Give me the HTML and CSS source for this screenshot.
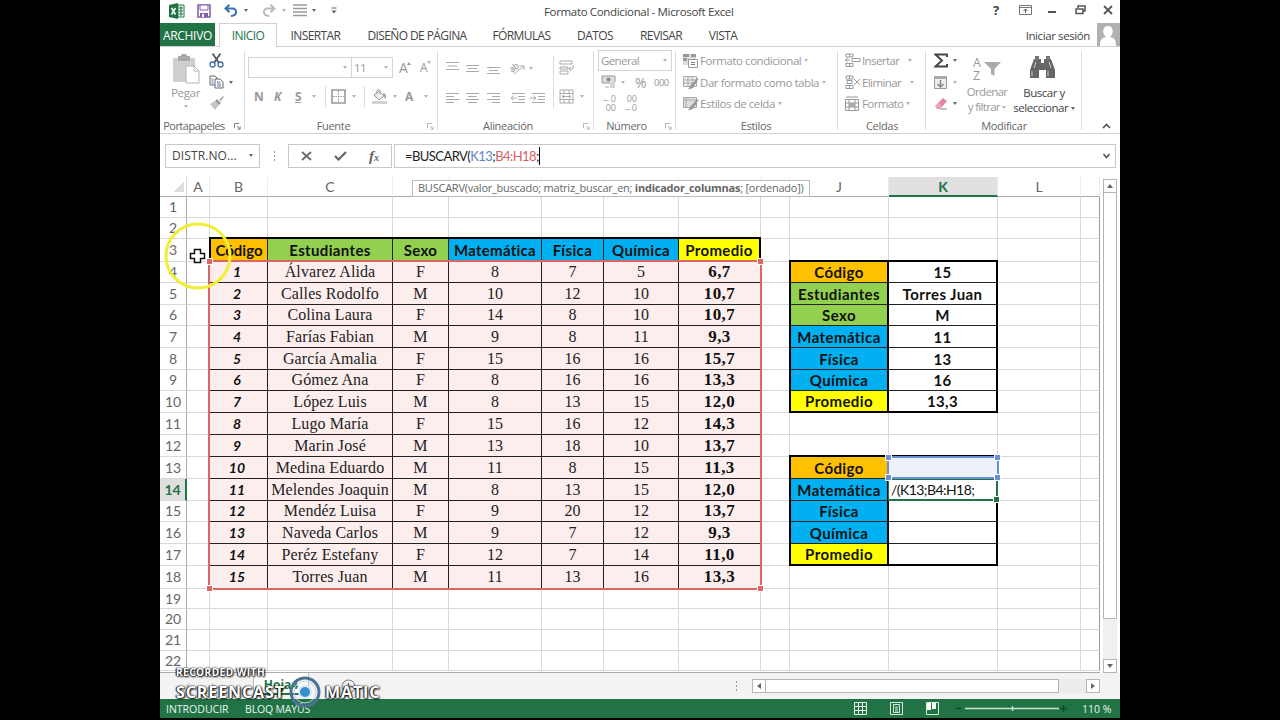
FILE: index.html
```html
<!DOCTYPE html>
<html lang="es">
<head>
    <meta charset="UTF-8">
    <meta name="viewport" content="width=device-width, initial-scale=1.0">
    <title>Formato Condicional - Microsoft Excel</title>
    <link rel="stylesheet" href="styles.css">
</head>
<body>

<div class="window">

    <!-- Title bar -->
    <header class="titlebar">
        <div class="quick">
            <svg width="16" height="16" viewBox="0 0 16 16"><path d="M9 2h6v12H9z" fill="#fff" stroke="#217346"/><path d="M10 5h4M10 8h4M10 11h4M12 3v10" stroke="#217346"/><path d="M0 2l9-2v16l-9-2z" fill="#217346"/><path d="M2.500 5l4 6.500M6.500 5l-4 6.500" stroke="#fff" stroke-width="1.500"/></svg>
            <svg width="14" height="14" viewBox="0 0 14 14"><path d="M1 1h12v12H1z" fill="#fff" stroke="#8560a8" stroke-width="1.600"/><path d="M3 1h8v5H3z" fill="#fff" stroke="#8560a8"/><path d="M3 9h8v4H3z" fill="#8560a8"/><path d="M5 10h2v3H5z" fill="#fff"/></svg>
            <svg width="14" height="13" viewBox="0 0 14 13"><path d="M1.500 4.500h7c5 0 5 7-1.500 7.500M5.500.800L1.500 4.500l4 3.700" fill="none" stroke="#3673b5" stroke-width="2"/></svg>
            <i class="caret dark"></i>
            <svg width="14" height="13" viewBox="0 0 14 13"><path d="M12.500 4.500h-7c-5 0-5 7 1.500 7.500M8.500.800l4 3.700-4 3.700" fill="none" stroke="#bbb" stroke-width="2"/></svg>
            <i class="caret"></i>
            <svg width="14" height="13" viewBox="0 0 14 13"><path d="M0 1h14M0 4.500h14M0 8h14M0 11.500h14" stroke="#999" stroke-width="1.600"/></svg>
            <i class="caret dark"></i>
            <svg width="6" height="8" viewBox="0 0 6 8"><path d="M.5 1h5" stroke="#666"/><path d="M.5 3.500h5L3 6.500z" fill="#666"/></svg>
        </div>
        <div class="title">Formato Condicional - Microsoft Excel</div>
        <div class="controls">
            <b>?</b>
            <svg width="13" height="11" viewBox="0 0 13 11"><path d="M.5.500h12v9H.5zM.5 2.500h12" fill="none" stroke="#777"/><path d="M6.500 8V4M4.500 6l2-2 2 2" fill="none" stroke="#555"/></svg>
            <svg width="10" height="11" viewBox="0 0 10 11"><path d="M1 7h8" stroke="#555" stroke-width="2"/></svg>
            <svg width="11" height="10" viewBox="0 0 11 10"><path d="M3 3V1h7v5H8" fill="none" stroke="#555" stroke-width="1.500"/><path d="M1 4h7v4.500H1z" fill="#fff" stroke="#555" stroke-width="1.500"/></svg>
            <svg width="10" height="10" viewBox="0 0 10 10"><path d="M1 1l8 8M9 1L1 9" stroke="#555" stroke-width="1.800"/></svg>
        </div>
    </header>

    <!-- Ribbon tabs -->
    <nav class="tabs">
        <span class="tab file">ARCHIVO</span>
        <span class="tab active">INICIO</span>
        <span class="tab insertar">INSERTAR</span>
        <span class="tab diseno">DISEÑO DE PÁGINA</span>
        <span class="tab formulas">FÓRMULAS</span>
        <span class="tab datos">DATOS</span>
        <span class="tab revisar">REVISAR</span>
        <span class="tab vista">VISTA</span>
        <span class="login">Iniciar sesión</span>
        <svg class="avatar" width="23" height="23" viewBox="0 0 23 23"><path d="M0 0h23v23H0z" fill="#b0b0b0"/><path d="M3 23c0-7 2-8 6-9-4-3-4-11 2-11s6 8 2 11c4 1 6 2 6 9z" fill="#fff"/></svg>
    </nav>

    <!-- Ribbon -->
    <section class="ribbon">
        <div class="group g-clip">
            <div class="body">
                <div class="big paste">
                    <svg width="28" height="30" viewBox="0 0 28 30"><path d="M1 4h22v24H1z" fill="#cfcfcf"/><path d="M6 2h3c0-3 6-3 6 0h3v5H6z" fill="#a8a8a8"/><path d="M14 12h8l5 5v12H14z" fill="#fff" stroke="#b5b5b5"/><path d="M22 12v5h5" fill="none" stroke="#b5b5b5"/></svg>
                    <span>Pegar</span>
                    <i class="caret"></i>
                </div>
                <div class="stack">
                    <svg width="15" height="15" viewBox="0 0 15 15"><path d="M3.500.500L10 10M11.500.500L5 10" stroke="#555" stroke-width="1.700"/><circle cx="3.500" cy="11.500" r="2.500" fill="none" stroke="#3c6aa0" stroke-width="1.300"/><circle cx="11.500" cy="11.500" r="2.500" fill="none" stroke="#3c6aa0" stroke-width="1.300"/></svg>
                    <div class="row"><svg width="15" height="14" viewBox="0 0 15 14"><path d="M1 1h5l2 2v7H1z" fill="#fff" stroke="#666"/><path d="M6 4h5l3 3v6H6z" fill="#fff" stroke="#666"/><path d="M8 7h3M8 9h4M8 11h4M2.500 4h2M2.500 6h2M2.500 8h2" stroke="#4a76ad"/></svg><i class="caret dark"></i></div>
                    <svg width="15" height="14" viewBox="0 0 15 14"><path d="M1 8l5-3 4 4-4 5z" fill="#c4c4c4"/><path d="M6 5l2-2 4 4-2 2z" fill="#999"/><path d="M10 4l4-4 1 1-3 4z" fill="#aaa"/></svg>
                </div>
            </div>
            <footer>Portapapeles<svg class="launch dark" viewBox="0 0 8 8"><path d="M.5 6V.500H6M3.500 3.500l3 3M7 4v3H4" /></svg></footer>
        </div>

        <div class="group g-font">
            <div class="body">
                <div class="row font-row">
                    <div class="combo name"><i class="caret"></i></div>
                    <div class="combo size"><span>11</span><i class="caret"></i></div>
                    <span class="grow">A<i class="caret flip"></i></span>
                    <span class="shrink">A<i class="caret"></i></span>
                </div>
                <div class="row style-row">
                    <b>N</b><b><i>K</i></b><b><u>S</u></b><i class="caret"></i>
                    <hr>
                    <svg width="15" height="15" viewBox="0 0 15 15"><path d="M1 1h13v13H1z" fill="none" stroke="#999" stroke-width="1.600"/><path d="M7.500 2v11M2 7.500h11" stroke="#999" stroke-dasharray="1.500 1"/></svg><i class="caret"></i>
                    <hr>
                    <svg width="16" height="15" viewBox="0 0 16 15"><path d="M2 6l5-4 5 5-5 4z" fill="#eee" stroke="#999"/><path d="M5 5V2c0-2 3-2 3 0v3" fill="none" stroke="#999"/><path d="M11 4c4 0 3 4 3 6-2 0-2-3-3-5z" fill="#aaa"/><path d="M0 12h15v3H0z" fill="#d2d2d2"/></svg><i class="caret"></i>
                    <b>A</b><i class="caret"></i>
                </div>
            </div>
            <footer>Fuente<svg class="launch" viewBox="0 0 8 8"><path d="M.5 6V.500H6M3.500 3.500l3 3M7 4v3H4" /></svg></footer>
        </div>

        <div class="group g-align">
            <div class="body">
                <div class="align-grid">
                    <svg width="14" height="14" viewBox="0 0 14 14"><path d="M0 1.500h13M2 5h9M0 8.500h13"/></svg>
                    <svg width="14" height="14" viewBox="0 0 14 14"><path d="M0 4.500h13M2 7.500h9M0 10.500h13"/></svg>
                    <svg width="14" height="14" viewBox="0 0 14 14"><path d="M0 6.500h13M2 9.500h9M0 12.500h13"/></svg>
                    <div class="row"><svg width="16" height="14" viewBox="0 0 16 14"><text x="0" y="10" transform="rotate(-38 4 8)">ab</text><path d="M4 13L14 5M14 9V5h-4"/></svg><i class="caret"></i></div>
                    <span></span>
                    <svg width="14" height="14" viewBox="0 0 14 14"><path d="M0 2.500h13M0 5.500h8M0 8.500h13M0 11.500h8"/></svg>
                    <svg width="14" height="14" viewBox="0 0 14 14"><path d="M0 2.500h13M2 5.500h9M0 8.500h13M2 11.500h9"/></svg>
                    <svg width="14" height="14" viewBox="0 0 14 14"><path d="M0 2.500h13M5 5.500h8M0 8.500h13M5 11.500h8"/></svg>
                    <svg width="15" height="14" viewBox="0 0 15 14"><path d="M2 2.500h13M8 5.500h7M8 8.500h7M2 11.500h13M7 7H1M3.500 4.500L1 7l2.500 2.500"/></svg>
                    <svg width="15" height="14" viewBox="0 0 15 14"><path d="M2 2.500h13M8 5.500h7M8 8.500h7M2 11.500h13M0 7h6M3.500 4.500L6 7 3.500 9.500"/></svg>
                </div>
                <div class="wrap-col">
                    <svg width="16" height="15" viewBox="0 0 16 15"><path d="M1 1h12v3H1zM1 7h8v2H1zM1 11h8v3H1zM10 9h4V5M12 7l-2 2 2 2"/></svg>
                    <div class="row"><svg width="16" height="15" viewBox="0 0 16 15"><path d="M1 1h13v13H1zM1 4.500h13M1 10.500h13M5 1v3M10 1v3M5 11v3M10 11v3M3 7.500h9M5 6L3 7.500 5 9M10 6l2 1.500L10 9"/></svg><i class="caret"></i></div>
                </div>
            </div>
            <footer>Alineación<svg class="launch" viewBox="0 0 8 8"><path d="M.5 6V.500H6M3.500 3.500l3 3M7 4v3H4" /></svg></footer>
        </div>

        <div class="group g-num">
            <div class="body">
                <div class="combo"><span>General</span><i class="caret"></i></div>
                <div class="row num-row">
                    <svg width="16" height="14" viewBox="0 0 16 14"><path d="M1 1h13v7H1z" fill="#ddd" stroke="#999"/><circle cx="7.500" cy="4.500" r="2" fill="#888"/><path d="M9 7h6v6H9z" fill="#fff"/><path d="M9 8h5M9 10h5M9 12h5M4 12h4" stroke="#aaa"/></svg><i class="caret"></i>
                    <span class="pct">%</span><span class="zeros">000</span>
                </div>
                <div class="row dec-row">
                    <div class="dec"><span>←0</span><span>00</span></div>
                    <div class="dec"><span>00</span><span>→0</span></div>
                </div>
            </div>
            <footer>Número<svg class="launch" viewBox="0 0 8 8"><path d="M.5 6V.500H6M3.500 3.500l3 3M7 4v3H4" /></svg></footer>
        </div>

        <div class="group g-styles">
            <div class="body list">
                <div class="row"><svg width="16" height="15" viewBox="0 0 16 15"><path d="M0 1h13v11H0z" fill="#ddd"/><path d="M0 1h6v3H0zM8 1h5v3H8zM0 5h4v3H0z" fill="#999"/><path d="M5.500 6.500h9v8h-9z" fill="#fff" stroke="#999"/><path d="M8 9.500h4M8 11.500h4" stroke="#777"/></svg><span>Formato condicional</span><i class="caret"></i></div>
                <div class="row"><svg width="16" height="15" viewBox="0 0 16 15"><path d="M.5 1.500h13v10H.5zM.5 5h13M.5 8h13M5 1v11M9 1v11" fill="#eee" stroke="#aaa"/><path d="M14 3l1.500 1L10 13l-5 1.500L7 11z" fill="#999"/></svg><span>Dar formato como tabla</span><i class="caret"></i></div>
                <div class="row"><svg width="16" height="15" viewBox="0 0 16 15"><path d="M.5 1.500h13v10H.5zM.5 4h13M3 1v11" fill="#ddd" stroke="#aaa"/><path d="M14 3l1.500 1L10 13l-5 1.500L7 11z" fill="#999"/></svg><span>Estilos de celda</span><i class="caret"></i></div>
            </div>
            <footer>Estilos</footer>
        </div>

        <div class="group g-cells">
            <div class="body list">
                <div class="row"><svg width="16" height="15" viewBox="0 0 16 15"><path d="M1 1h7v3H1zM4.500 1v3M1 10.500h7v3H1zM4.500 10v4M7 5.500h8v3H7zM5 7H0M2.500 5L.5 7l2 2" fill="none" stroke="#999"/></svg><span>Insertar</span><i class="caret far"></i></div>
                <div class="row"><svg width="16" height="15" viewBox="0 0 16 15"><path d="M1 1h7v3H1zM4.500 1v3M1 10.500h7v3H1zM4.500 10v4M2 5.500h5v3H2zM9 4l6 6M15 4l-6 6" fill="none" stroke="#999"/></svg><span>Eliminar</span><i class="caret far"></i></div>
                <div class="row"><svg width="16" height="15" viewBox="0 0 16 15"><path d="M.5 3.500h13v11H.5zM.5 7h13M.5 11h13M4 4v10M10 4v10M1 1h12" fill="none" stroke="#999"/><path d="M4 7h6v4H4z" fill="#aaa"/></svg><span>Formato</span><i class="caret"></i></div>
            </div>
            <footer>Celdas</footer>
        </div>

        <div class="group g-edit">
            <div class="body">
                <div class="stack">
                    <div class="row"><svg width="14" height="15" viewBox="0 0 14 15"><path d="M13 4V1.500H1.500L8 7.500l-6.500 6H13V11" fill="none" stroke="#444" stroke-width="1.900"/></svg><i class="caret dark"></i></div>
                    <div class="row"><svg width="14" height="15" viewBox="0 0 14 15"><path d="M.5 1.500h12v12H.5z" fill="#eee" stroke="#999"/><path d="M.5 1h12v3H.5z" fill="#aaa"/><path d="M6.500 5v7M3.500 9l3 3 3-3" fill="none" stroke="#888" stroke-width="1.500"/></svg><i class="caret"></i></div>
                    <div class="row"><svg width="14" height="13" viewBox="0 0 14 13"><path d="M4 6l5-5 4 3-5 6z" fill="#e486a2"/><path d="M4 6l4 4-2 2H3L1 9z" fill="#ec9fb5"/><path d="M6 12h7" stroke="#888"/></svg><i class="caret dark"></i></div>
                </div>
                <div class="big sort">
                    <div class="sort-icon"><div><b>A</b><b>Z</b></div><svg width="17" height="16" viewBox="0 0 17 16"><path d="M0 1h17l-6.500 7v7L7 13V8z" fill="#aaa"/></svg></div>
                    <span>Ordenar</span>
                    <span>y filtrar <i class="caret"></i></span>
                </div>
                <div class="big find">
                    <svg width="25" height="23" viewBox="0 0 25 23"><path d="M4 3h7v4h3V3h7l4 11v8h-9v-8h-7v8H0v-8z" fill="#666"/><path d="M5 0h4v4H5zM16 0h4v4h-4z" fill="#777"/><path d="M2 15v5M18 15v5M6 6l-2 6M19 6l2 6" stroke="#ccc"/></svg>
                    <span>Buscar y</span>
                    <span>seleccionar <i class="caret dark"></i></span>
                </div>
            </div>
            <footer>Modificar</footer>
        </div>
        <svg class="collapse" width="9" height="6" viewBox="0 0 9 6"><path d="M1 5l3.500-3.500L8 5" fill="none" stroke="#555" stroke-width="1.700"/></svg>
    </section>

    <!-- Formula bar -->
    <section class="formula">
        <div class="box namebox"><span>DISTR.NO...</span><i class="caret dark"></i></div>
        <svg class="dots" width="3" height="11" viewBox="0 0 3 11"><path d="M1 1h1M1 5h1M1 9h1" stroke="#999" stroke-width="2"/></svg>
        <div class="box buttons">
            <svg width="11" height="10" viewBox="0 0 11 10"><path d="M1 1l9 8M10 1L1 9" stroke="#666" stroke-width="1.700"/></svg>
            <svg width="13" height="10" viewBox="0 0 13 10"><path d="M1 5l3.500 3.500L12 1" fill="none" stroke="#666" stroke-width="2.200"/></svg>
            <em>f<small>x</small></em>
        </div>
        <div class="box input"><span class="text">=BUSCARV(<span class="blue">K13</span>;<span class="red">B4:H18</span>;</span><span class="cursor"></span>
            <svg width="7" height="6" viewBox="0 0 7 6"><path d="M.5 1l3 3.500L6.500 1" fill="none" stroke="#555" stroke-width="1.600"/></svg>
        </div>
    </section>

    <!-- Sheet -->
    <main class="work">
        <div class="sheet" id="sheet"></div>
        <div class="vscroll">
            <div class="btn"><i class="up"></i></div>
            <div class="thumb"></div>
            <div class="track"></div>
            <div class="btn"><i class="down"></i></div>
        </div>
        <div class="hint">BUSCARV(valor_buscado; matriz_buscar_en; <b>indicador_columnas</b>; [ordenado])</div>
        <div class="range red-range"><i></i><i></i><i></i><i></i></div>
        <div class="range edit-range"><i></i></div>
        <div class="range blue-range"><i></i><i></i><i></i><i></i></div>
    </main>

    <!-- Sheet tabs -->
    <section class="sheets">
        <i class="left"></i><i class="right"></i>
        <span class="sheet-tab">Hoja4</span>
        <svg class="plus" width="15" height="15" viewBox="0 0 15 15"><circle cx="7.500" cy="7.500" r="6.500" fill="none" stroke="#777"/><path d="M7.500 4v7M4 7.500h7" stroke="#666" stroke-width="1.500"/></svg>
        <svg class="dots" width="3" height="11" viewBox="0 0 3 11"><path d="M1 1h1M1 5h1M1 9h1" stroke="#999" stroke-width="2"/></svg>
        <div class="hscroll">
            <div class="btn"><i class="left"></i></div>
            <div class="thumb"></div>
            <div class="track"></div>
            <div class="btn"><i class="right"></i></div>
        </div>
    </section>

    <!-- Status bar -->
    <footer class="status">
        <span class="mode">INTRODUCIR</span>
        <span class="caps">BLOQ MAYÚS</span>
        <svg class="views" width="86" height="13" viewBox="0 0 86 13"><path d="M.5.500h12v12H.5zM.5 4.500h12M.5 8.500h12M4.500.500v12M8.500.500v12" fill="none" stroke="#e5f2ea"/><path d="M36.500.500h12v12h-12zM39.500 2.500h6v8h-6zM41 5h3M41 7h3M41 9h3" fill="none" stroke="#d5e9dd"/><path d="M72.500.500h12v12h-12z" fill="none" stroke="#d5e9dd"/><path d="M73 1h4v7h-4zM78 1h4v6h-4z" fill="#fff"/></svg>
        <svg class="zoom" width="114" height="11" viewBox="0 0 114 11"><path d="M1 5.500h5M105 5.500h7M108.500 2v7" stroke="#0e4d2a" stroke-width="1.600"/><path d="M10 5.500h94M57.500 3v5" stroke="#cfe5d8" stroke-width="1.300"/></svg>
        <span class="pctzoom">110 %</span>
    </footer>

    <!-- Recorder mark and mouse pointer -->
    <div class="mark-top">RECORDED WITH</div>
    <div class="mark"><span class="cast">SCREENCAST</span><svg width="34" height="34" viewBox="0 0 34 34"><circle cx="17" cy="17" r="14" fill="none" stroke="#4b7391" stroke-width="3"/><circle cx="17" cy="17" r="11" fill="none" stroke="#b9d4e4"/><circle cx="17" cy="17" r="7" fill="#d8eaf5"/><circle cx="17" cy="17" r="5" fill="#3a8fd0"/></svg><span class="matic">MATIC</span></div>
    <svg class="pointer" width="68" height="68" viewBox="0 0 68 68"><circle cx="34" cy="34" r="32" fill="none" stroke="#f1ee35" stroke-width="3"/><path d="M30.500 27.500h6v4h4v5h-4v4h-6v-4h-4v-5h4z" fill="#fff" stroke="#111" stroke-width="1.500"/></svg>
</div>

<script src="sheet.js"></script>
</body>
</html>
```
FILE: sheet.js
```js
const cols = 'ABCDEFGHIJKLM'.split('');
const heads = ['Código', 'Estudiantes', 'Sexo', 'Matemática', 'Física', 'Química', 'Promedio'];
const colors = ['orange', 'green', 'green', 'sky', 'sky', 'sky', 'yellow'];

const students = [
    ['Álvarez Alida', 'F', 8, 7, 5, '6,7'],
    ['Calles Rodolfo', 'M', 10, 12, 10, '10,7'],
    ['Colina Laura', 'F', 14, 8, 10, '10,7'],
    ['Farías Fabian', 'M', 9, 8, 11, '9,3'],
    ['García Amalia', 'F', 15, 16, 16, '15,7'],
    ['Gómez Ana', 'F', 8, 16, 16, '13,3'],
    ['López Luis', 'M', 8, 13, 15, '12,0'],
    ['Lugo María', 'F', 15, 16, 12, '14,3'],
    ['Marin José', 'M', 13, 18, 10, '13,7'],
    ['Medina Eduardo', 'M', 11, 8, 15, '11,3'],
    ['Melendes Joaquin', 'M', 8, 13, 15, '12,0'],
    ['Mendéz Luisa', 'F', 9, 20, 12, '13,7'],
    ['Naveda Carlos', 'M', 9, 7, 12, '9,3'],
    ['Peréz Estefany', 'F', 12, 7, 14, '11,0'],
    ['Torres Juan', 'M', 11, 13, 16, '13,3']
];

const record = ['15', 'Torres Juan', 'M', '11', '13', '16', '13,3'];
const lookup = [0, 3, 4, 5, 6];

const cells = {};

heads.forEach((h, i) => cells[cols[i + 1] + 3] = [h, 'head ' + colors[i]]);

students.forEach((s, r) => {
    cells['B' + (r + 4)] = [r + 1, 'data code'];
    s.forEach((v, i) => cells[cols[i + 2] + (r + 4)] = [v, i === 5 ? 'data avg' : 'data']);
});

record.forEach((v, i) => {
    const edge = (i === 0 ? ' first' : '') + (i === 6 ? ' last' : '');
    cells['J' + (i + 4)] = [heads[i], 'card key ' + colors[i] + edge];
    cells['K' + (i + 4)] = [v, 'card' + edge];
});

lookup.forEach((n, i) => {
    const edge = (i === 0 ? ' first' : '') + (i === 4 ? ' last' : '');
    cells['J' + (i + 13)] = [heads[n], 'card key ' + colors[n] + edge];
    cells['K' + (i + 13)] = ['', 'card' + edge];
});
cells.K14 = ['/(K13;B4:H18;', 'card editing'];

let html = '<div class="corner"></div>';
cols.forEach(c => html += `<div class="colhead${c === 'K' ? ' on' : ''}">${c === 'M' ? '' : c}</div>`);

for (let r = 1; r <= 22; r++) {
    html += `<div class="rowhead${r === 14 ? ' on' : ''}">${r}</div>`;
    cols.forEach(c => {
        const [text, cls] = cells[c + r] || ['', ''];
        html += `<div class="cell ${cls} c${c}">${text}</div>`;
    });
}

document.getElementById('sheet').innerHTML = html;
```
FILE: styles.css
```css
* {
    box-sizing: border-box;
}

body {
    margin: 0;
    background: #000;
    font-family: 'Open Sans', 'Noto Sans', sans-serif;
    font-size: 11.5px;
    color: #444;
}

.window {
    position: relative;
    width: 960px;
    height: 718px;
    margin: 0 auto;
    background: #fff;
    overflow: hidden;
    white-space: nowrap;
}

svg {
    display: block;
    flex: none;
}

.row {
    display: flex;
    align-items: center;
}

.caret {
    flex: none;
    width: 0;
    height: 0;
    display: inline-block;
    border: 2.5px solid transparent;
    border-top: 3.5px solid #b5b5b5;
    border-bottom: 0;
}

.caret.flip {
    border-top: 0;
    border-bottom: 3.5px solid #999;
}

.caret.dark {
    border-top-color: #666;
}

/* title bar */
.titlebar {
    display: flex;
    align-items: center;
    height: 23px;
    padding-left: 9px;
}

.quick {
    display: grid;
    grid-template-columns: 28px 27px 20px 18px 20px 11px 19px 19px 10px;
    align-items: center;
    width: 374px;
    height: 20px;
    margin-top: -2px;
}

.title {
    width: 450px;
    padding-left: 1px;
    letter-spacing: -0.34px;
}

.controls {
    display: grid;
    grid-template-columns: 26px 28px 28px 28px 12px;
    align-items: center;
    margin-top: -3px;
}

.controls b {
    font-size: 13px;
    line-height: 18px;
}

/* tabs */
.tabs {
    display: flex;
    height: 24px;
    border-bottom: 1px solid #d0d0d0;
    line-height: 25px;
    font-size: 12px;
    letter-spacing: -0.6px;
}

.tab {
    flex: none;
    text-align: center;
}

.tab.file {
    width: 55px;
    background: #217346;
    color: #fff;
    letter-spacing: -0.3px;
}

.tab.active {
    width: 58px;
    height: 24px;
    margin-left: 4px;
    background: #fff;
    border: 1px solid #d0d0d0;
    border-bottom: 0;
    color: #217346;
    line-height: 23px;
}

.insertar { width: 77px; }
.diseno { width: 126px; }
.formulas { width: 83px; }
.datos { width: 64px; }
.revisar { width: 68px; }
.vista { width: 56px; }

.login {
    margin-left: auto;
    margin-right: 7px;
    font-size: 11.5px;
    letter-spacing: -0.4px;
}

/* ribbon */
.ribbon {
    display: flex;
    height: 87px;
    border-bottom: 1px solid #d0d0d0;
    position: relative;
    color: #999;
    letter-spacing: -0.5px;
}

.group {
    position: relative;
    display: flex;
    flex-direction: column;
    flex: none;
}

.group::after {
    content: "";
    position: absolute;
    right: 0;
    top: 4px;
    width: 1px;
    height: 79px;
    background: #ddd;
}

.group .body {
    height: 71px;
}

.group footer {
    height: 15px;
    line-height: 15px;
    text-align: center;
    color: #666;
    position: relative;
    font-size: 11px;
    letter-spacing: -0.3px;
}

.launch {
    position: absolute;
    right: 4px;
    top: 5px;
    width: 7px;
    height: 7px;
    fill: none;
    stroke: #aaa;
}

.launch.dark {
    stroke: #666;
}

.g-clip { width: 85px; }
.g-font { width: 193px; }
.g-align { width: 156px; }
.g-num { width: 82px; }
.g-styles { width: 162px; }
.g-cells { width: 88px; }
.g-edit { width: 156px; }

.g-clip footer { padding-right: 17px; letter-spacing: -0.5px; }
.g-font footer { padding-right: 16px; }
.g-align footer { padding-right: 16px; }
.g-num footer { padding-right: 17px; }
.g-styles footer { padding-right: 2px; }

.big {
    display: flex;
    flex-direction: column;
    align-items: center;
    line-height: 15px;
}

.g-clip .body {
    display: flex;
}

.paste {
    width: 51px;
    padding-top: 7px;
    letter-spacing: -0.3px;
}

.paste span {
    margin: 1px 0 5px;
}

.stack {
    display: flex;
    flex-direction: column;
    justify-content: space-between;
    padding: 6px 0 8px;
    margin-left: -2px;
    width: 30px;
}

.stack .caret {
    margin-left: 5px;
}

.combo {
    display: flex;
    align-items: center;
    justify-content: space-between;
    height: 21px;
    border: 1px solid #d5d5d5;
    padding: 0 4px 0 2px;
}

.font-row {
    margin-top: 10px;
    padding-left: 3px;
}

.combo.name {
    width: 104px;
    justify-content: flex-end;
}

.combo.size {
    width: 41px;
    border-left: 0;
}

.grow,
.shrink {
    font-size: 14px;
    line-height: 20px;
    margin-left: 6px;
    width: 15px;
}

.shrink {
    font-size: 12px;
}

.font-row span .caret {
    vertical-align: 8px;
}

.style-row {
    display: grid;
    grid-template-columns: 20px 21px 17px 13px 6px 21px 12px 8px 21px 12px 19px 8px;
    margin-top: 8px;
    padding-left: 9px;
    height: 21px;
    font-size: 12px;
}

.style-row hr {
    width: 1px;
    height: 21px;
    margin: 0;
    border: 0;
    background: #ddd;
}

.g-align .body {
    display: flex;
}

.g-align svg {
    fill: none;
    stroke: #aaa;
}

.g-align text {
    fill: #888;
    stroke: none;
    font-size: 9px;
}

.align-grid {
    display: grid;
    grid-template-columns: 20px 21px 23px 20px 22px;
    grid-template-rows: 30px 29px;
    align-items: center;
    padding: 6px 0 0 8px;
    width: 115px;
}

.align-grid svg {
    overflow: visible;
}

.align-grid .caret {
    margin-left: 3px;
}

.wrap-col {
    position: relative;
    padding: 13px 0 0 6px;
    height: 62px;
}

.wrap-col::before {
    content: "";
    position: absolute;
    left: 0;
    top: 9px;
    width: 1px;
    height: 52px;
    background: #ddd;
}

.wrap-col .row {
    margin-top: 14px;
}

.wrap-col .caret {
    margin-left: 5px;
}

.g-num .combo {
    width: 74px;
    margin: 3px 0 0 4px;
    letter-spacing: -0.6px;
}

.num-row {
    height: 22px;
    padding-left: 7px;
}

.pct {
    font-size: 14px;
    margin-left: 10px;
    width: 19px;
}

.zeros {
    font-size: 9.5px;
}

.num-row .caret {
    margin-left: 4px;
}

.dec-row {
    gap: 6px;
    padding: 1px 0 0 7px;
    font-size: 9px;
    line-height: 9px;
    letter-spacing: 0;
}

.dec {
    display: flex;
    flex-direction: column;
    align-items: flex-end;
    width: 15px;
}

.list {
    padding-top: 3px;
}

.list .row {
    height: 21.5px;
}

.g-styles .list { padding-left: 7px; letter-spacing: -0.44px; }
.g-cells .list { padding-left: 7px; letter-spacing: -0.6px; }

.list span {
    margin: 0 3px 0 1px;
}

.list .far {
    margin-left: 6px;
}

.g-edit .body {
    display: flex;
}

.g-edit .stack {
    margin-left: 8px;
    width: 29px;
}

.sort {
    width: 48px;
    padding-top: 8px;
    letter-spacing: -0.7px;
}

.sort-icon {
    display: flex;
    align-items: center;
    height: 30px;
    margin-top: -1px;
}

.sort-icon b {
    display: block;
    width: 11px;
    font-size: 12.5px;
    font-weight: normal;
    line-height: 13px;
}

.find {
    width: 66px;
    padding-top: 9px;
    color: #444;
}

.find svg {
    margin: 0 3px 6px 0;
}

.big .caret {
    vertical-align: 2px;
}

.collapse {
    margin: 76px 0 0 20px;
}

/* formula bar */
.formula {
    display: flex;
    align-items: center;
    height: 43px;
    padding: 1px 0 0 5px;
}

.box {
    height: 24px;
    border: 1px solid #c8c8c8;
    display: flex;
    align-items: center;
}

.namebox {
    width: 95px;
    padding: 0 6px 1px;
    justify-content: space-between;
    font-size: 12px;
    letter-spacing: 0.1px;
}

.formula .dots {
    margin: 0 12px 0 13px;
}

.buttons {
    width: 104px;
    padding: 0 12px;
    justify-content: space-between;
}

.buttons em {
    font-family: 'Liberation Serif', serif;
    font-size: 15px;
    font-weight: bold;
    color: #666;
}

.buttons small {
    font-size: 10px;
}

.input {
    width: 722px;
    margin-left: 2px;
    padding: 0 5px 0 10px;
    font-family: Lato, sans-serif;
    font-size: 13px;
    letter-spacing: -0.55px;
    color: #222;
}

.cursor {
    width: 1px;
    height: 18px;
    background: #000;
}

.input svg {
    margin-left: auto;
}

.blue { color: #5b87c5; }
.red { color: #d9605f; }

/* sheet */
.work {
    position: relative;
    display: flex;
    height: 496px;
}

.sheet {
    display: grid;
    width: 940px;
    height: 496px;
    grid-template-columns: 27px 23px 58px 125px 56px 93px 62px 75px 82px 29px 99px 109px 83px 19px;
    grid-template-rows: 20px 21px 21px 23px 21px 22px 21px 22px 22px 21px 22px 22px 22px 22px 22px 21px 22px 22px 23px 20px 21px 21px 20px;
    border-bottom: 1px solid #aaa;
    font-family: Lato, sans-serif;
    font-size: 14px;
    font-variant-ligatures: none;
}

.sheet > div {
    border-right: 1px solid #d9d9d9;
    border-bottom: 1px solid #d9d9d9;
    display: flex;
    align-items: center;
    justify-content: center;
    min-width: 0;
    line-height: 18px;
}

.sheet > .corner,
.sheet > .colhead {
    border-bottom-color: #aaa;
}

.sheet > .corner {
    background: linear-gradient(135deg, transparent 50%, #ddd 50%) no-repeat 14px 5px / 10px 10px;
}

.sheet > .colhead {
    border-right-color: #ececec;
    color: #666;
    padding-top: 1px;
}

.sheet > .colhead.on {
    background: #e0e0e0;
    border-bottom: 2px solid #217346;
    color: #217346;
    font-weight: bold;
    padding-top: 2px;
}

.sheet > .rowhead {
    border-right-color: #aaa;
    color: #666;
}

.sheet > .rowhead.on {
    background: #e0e0e0;
    border-right: 2px solid #217346;
    color: #217346;
    font-weight: bold;
}

.sheet > .cM {
    border-right-color: #999;
}

.sheet > .head {
    color: #111;
    font-size: 15px;
    font-weight: bold;
    border-right-color: #222;
    border-bottom-color: #c0504d;
    box-shadow: 0 -2px 0 #000;
    letter-spacing: 0.35px;
}

.sheet > .head.cB {
    border-left: 2px solid #000;
    margin-left: -1px;
    letter-spacing: 0;
}

.sheet > .head.cE {
    letter-spacing: 0.25px;
}

.sheet > .head.cH {
    border-right: 2px solid #000;
}

.orange { background: #ffc000; }
.green { background: #92d050; }
.sky { background: #00b0f0; }
.yellow { background: #ff0; }

.sheet > .data {
    background: #fdeeee;
    border-color: #222;
    color: #222;
    font-family: 'Liberation Serif', serif;
    font-size: 16px;
    letter-spacing: 0.1px;
}

.sheet > .code {
    font-family: Lato, sans-serif;
    font-size: 14px;
    font-weight: bold;
    font-style: italic;
    color: #111;
    padding-right: 3px;
}

.sheet > .avg {
    font-size: 17px;
    font-weight: bold;
    letter-spacing: 0.4px;
    color: #111;
}

.sheet > .card {
    border-color: #222;
    border-right: 2px solid #000;
    color: #111;
    font-size: 15px;
    font-weight: bold;
    letter-spacing: 0.4px;
}

.sheet > .key {
    border-left: 2px solid #000;
    margin-left: -1px;
}

.sheet > .first {
    box-shadow: 0 -2px 0 #000;
}

.sheet > .last {
    border-bottom: 2px solid #000;
}

.sheet > .editing {
    justify-content: flex-start;
    padding-left: 2px;
    font-size: 14px;
    font-weight: normal;
    letter-spacing: -0.55px;
}

.vscroll {
    width: 14px;
    margin: 2px 0 0 3px;
    display: flex;
    flex-direction: column;
    background: #f0f0f0;
}

.btn,
.thumb {
    border: 1px solid #b5b5b5;
    background: #fff;
}

.btn {
    flex: none;
    width: 14px;
    height: 14px;
    display: flex;
    align-items: center;
    justify-content: center;
}

.vscroll .thumb {
    height: 427px;
    margin-top: -1px;
}

.track {
    flex: 1;
}

.up, .down, .left, .right {
    border: 3px solid transparent;
}

.up { border-bottom: 4px solid #666; border-top: 0; }
.down { border-top: 4px solid #666; border-bottom: 0; }
.left { border-right: 4px solid #666; border-left: 0; }
.right { border-left: 4px solid #666; border-right: 0; }

.hint {
    position: absolute;
    left: 252px;
    top: 3px;
    width: 398px;
    height: 17px;
    border: 1px solid #bbb;
    background: #fff;
    padding-left: 5px;
    font-size: 11px;
    line-height: 14px;
    letter-spacing: -0.24px;
    color: #666;
}

.range {
    position: absolute;
}

.range i {
    position: absolute;
    width: 5px;
    height: 5px;
    outline: 1px solid #fff;
}

.range i:nth-child(1) { left: -3px; top: -3px; }
.range i:nth-child(2) { right: -3px; top: -3px; }
.range i:nth-child(3) { left: -3px; bottom: -3px; }
.range i:nth-child(4) { right: -3px; bottom: -3px; }

.red-range {
    left: 48px;
    top: 83px;
    width: 554px;
    height: 330px;
    border: 2px solid #dd6665;
}

.red-range i { background: #dd6665; }

.blue-range {
    left: 727px;
    top: 279px;
    width: 112px;
    height: 23px;
    border: 2px solid #6b8fd6;
    background: #edf2fa;
}

.blue-range i { background: #6b8fd6; }

.edit-range {
    left: 728px;
    top: 301px;
    width: 110px;
    height: 23px;
    border: 2px solid #217346;
    border-left-width: 1px;
}

.edit-range i:nth-child(1) {
    left: auto;
    top: auto;
    right: -3px;
    bottom: -3px;
    background: #217346;
}

/* sheet tabs */
.sheets {
    display: flex;
    align-items: center;
    height: 26px;
    background: #f3f3f3;
}

.sheets > .left { margin-left: 25px; border-right-color: #ccc; }
.sheets > .right { margin-left: 23px; border-left-color: #ccc; }

.sheet-tab {
    align-self: flex-start;
    width: 56px;
    height: 22px;
    margin-left: 37px;
    border: 1px solid #bbb;
    border-top: 0;
    border-bottom: 2px solid #217346;
    background: #fff;
    color: #217346;
    font-weight: bold;
    font-size: 12px;
    line-height: 24px;
    text-align: center;
}

.plus {
    margin-left: 32px;
}

.sheets .dots {
    margin-left: 379px;
}

.hscroll {
    display: flex;
    width: 348px;
    height: 14px;
    margin-left: 14px;
    background: #ececec;
}

.hscroll .thumb {
    width: 294px;
    margin-left: -1px;
}

/* status bar */
.status {
    display: flex;
    align-items: center;
    height: 19px;
    background: #217346;
    color: #e8f3ec;
    font-size: 10.5px;
    padding-left: 6px;
}

.mode { width: 79px; }
.caps { width: 609px; letter-spacing: -0.15px; }
.views { width: 86px; margin-right: 15px; }
.zoom { margin-right: 13px; }

/* overlays */
.mark-top,
.mark {
    position: absolute;
    color: #fff;
    font-weight: bold;
    text-shadow: 0 0 2px #000, 1px 1px 2px #000, -1px 0 1px #333;
}

.mark-top {
    left: 16px;
    top: 665px;
    font-size: 10px;
    line-height: 14px;
    letter-spacing: 0.5px;
}

.mark {
    left: 16px;
    top: 675px;
    display: flex;
    align-items: center;
    font-size: 16px;
    letter-spacing: 0.9px;
}

.cast { width: 112px; }

.matic {
    margin-left: 3px;
}

.pointer {
    position: absolute;
    left: 4px;
    top: 222px;
}
```
